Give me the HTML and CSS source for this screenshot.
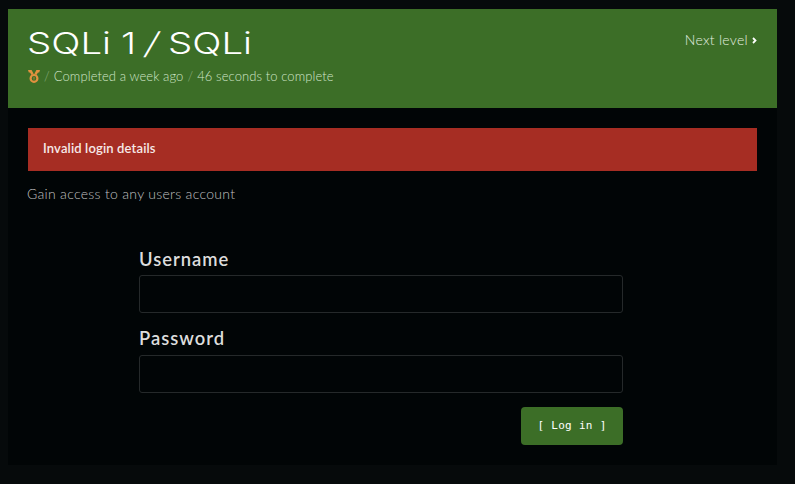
FILE: index.html
```
<!DOCTYPE html>
<html lang="en">
<head>
<meta charset="utf-8">
<title>SQLi 1 / SQLi</title>
<link rel="stylesheet" href="styles.css">
</head>
<body>
<main class="level">
  <header class="level-header">
    <div>
      <h1 class="title"><span class="word">SQLi</span><span class="word num">1</span><span class="word slash">/</span><span class="word">SQLi</span></h1>
      <p class="meta"><svg class="medal" viewBox="0 0 12 13"><path d="M0 0h3.6l2 3.8-2 1.2L2 2.6H.8zM12 0H8.4l-2 3.8 2 1.2L10 2.6h1.2z" fill="#e2913f"/><circle cx="6" cy="8.4" r="3.4" fill="none" stroke="#e2913f" stroke-width="2.2"/><path d="M6 7v2.6" stroke="#e2913f" stroke-width=".7"/></svg><span class="sep">/</span><span class="done">Completed a week ago</span><span class="sep">/</span><span class="time">46 seconds to complete</span></p>
    </div>
    <a class="next">Next level<svg class="chevron" viewBox="0 0 5 7"><path d="M1 1l2.5 2.5L1 6" fill="none" stroke="#fff" stroke-width="1.8"/></svg></a>
  </header>
  <section class="content">
    <div class="alert">Invalid login details</div>
    <p class="intro">Gain access to any users account</p>
    <form class="login">
      <label for="username">Username</label>
      <input id="username" type="text">
      <label for="password">Password</label>
      <input id="password" type="password">
      <button type="button">[ Log in ]</button>
    </form>
  </section>
</main>
</body>
</html>
```
FILE: styles.css
```
* { box-sizing: border-box; }
body {
  margin: 0;
  padding: 9px 18px 19px 8px;
  background: #060a0b;
  font-family: Lato, sans-serif;
  font-weight: 300;
  color: #c0c0c0;
}
h1, p { margin: 0; }
.level { height: 456px; background: #010506; }
.level-header {
  display: flex;
  justify-content: space-between;
  height: 99px;
  padding: 16px 20px 0;
  background: #3c6e27;
}
.title {
  display: flex;
  height: 36px;
  margin-left: -1px;
  font: 300 30px/36px Inter, sans-serif;
  color: #fff;
}
.word {
  display: block;
  width: 94px;
  transform: scaleX(1.28);
  transform-origin: left;
}
.num { width: 25px; }
.slash { width: 22px; transform: scaleX(1.2) skewX(-12deg); }
.meta {
  display: flex;
  align-items: center;
  height: 18px;
  margin-top: 6px;
  font-size: 13px;
  letter-spacing: .09px;
  line-height: 18px;
  color: #d0e5c8;
  white-space: nowrap;
}
.medal { width: 12px; height: 13px; }
.sep { margin: 0 4px; color: #8fae82; }
.next {
  display: flex;
  align-items: center;
  height: 20px;
  margin-top: 4px;
  font-size: 14px;
  letter-spacing: .3px;
  color: #e4eee0;
}
.chevron { width: 5px; height: 7px; margin: 2px 0 0 4px; }
.content { padding: 20px 20px 0; }
.alert {
  height: 43px;
  padding-left: 15px;
  background: #a62d23;
  font-size: 13px;
  font-weight: 600;
  letter-spacing: .15px;
  line-height: 41px;
  color: #f6e9e8;
}
.intro {
  height: 20px;
  margin: 13px 0 0 -1px;
  font-size: 14px;
  letter-spacing: .3px;
  line-height: 20px;
}
.login {
  display: flex;
  flex-direction: column;
  width: 484px;
  margin: 41px 0 0 111px;
}
label {
  height: 30px;
  font-size: 18.4px;
  font-weight: 600;
  line-height: 28px;
  letter-spacing: 1px;
  color: #ddd;
}
label[for="password"] { line-height: 27px; }
input {
  height: 38px;
  margin-bottom: 12px;
  border: 1px solid #25292a;
  border-radius: 3px;
  background: transparent;
}
button {
  align-self: flex-end;
  width: 102px;
  height: 38px;
  margin-top: 2px;
  padding: 0 0 2px;
  border: 0;
  border-radius: 4px;
  background: #3c6e27;
  font: 400 11px "DejaVu Sans Mono", monospace;
  letter-spacing: .3px;
  color: #fff;
}
```
